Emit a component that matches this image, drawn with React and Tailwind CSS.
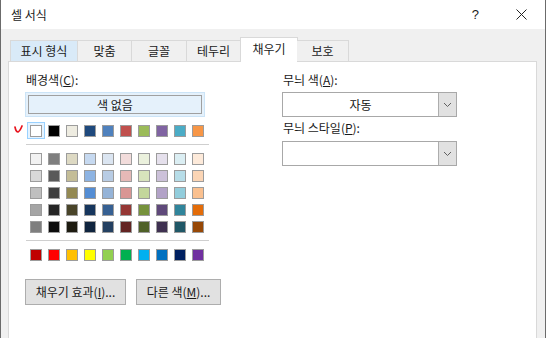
import React from "react";

// ─────────────────────────────────────────────────────────────
// 셀 서식 dialog — 채우기 tab
// ─────────────────────────────────────────────────────────────

const THEME = ["#FFFFFF", "#000000", "#EEECE1", "#1F497D", "#4F81BD", "#C0504D", "#9BBB59", "#8064A2", "#4BACC6", "#F79646"];

const TINTS = [
    ["#F2F2F2", "#7F7F7F", "#DDD9C3", "#C6D9F0", "#DBE5F1", "#F2DCDB", "#EBF1DD", "#E5E0EC", "#DBEEF3", "#FDEADA"],
    ["#D8D8D8", "#595959", "#C4BD97", "#8DB3E2", "#B8CCE4", "#E5B9B7", "#D7E3BC", "#CCC1D9", "#B7DDE8", "#FBD5B5"],
    ["#BFBFBF", "#3F3F3F", "#938953", "#548DD4", "#95B3D7", "#D99694", "#C3D69B", "#B2A2C7", "#92CDDC", "#FAC08F"],
    ["#A5A5A5", "#262626", "#494429", "#17365D", "#366092", "#953734", "#76923C", "#5F497A", "#31859B", "#E36C09"],
    ["#7F7F7F", "#0C0C0C", "#1D1B10", "#0F243E", "#244061", "#632423", "#4F6128", "#3F3151", "#205867", "#974806"],
];

const STANDARD = ["#C00000", "#FF0000", "#FFC000", "#FFFF00", "#92D050", "#00B050", "#00B0F0", "#0070C0", "#002060", "#7030A0"];

const TABS = [
    { label: "표시 형식", w: "w-[68px]", hover: true },
    { label: "맞춤", w: "w-[54px]" },
    { label: "글꼴", w: "w-[55px]" },
    { label: "테두리", w: "w-[54px]" },
    { label: "채우기", w: "w-[58px]", active: true },
    { label: "보호", w: "w-[52px]" },
];

function Swatch({ color }) {
    return <div className="w-[12px] h-[12px] border border-[#9c9c9c] shrink-0" style={{ background: color }} />;
}

function SwatchRow({ colors, first }) {
    return (
        <div className="relative flex gap-[6px] pl-[4px] h-[12px]">
            {first && (
                <div className="absolute left-[1px] top-[-3px] w-[18px] h-[17px] bg-[#e5f3ff] border border-[#99d1ff]" />
            )}
            {colors.map((c, i) => (
                <div key={i} className="relative">
                    <Swatch color={c} />
                </div>
            ))}
        </div>
    );
}

function Chevron() {
    return (
        <svg width="9" height="6" viewBox="0 0 9 6" className="block">
            <path d="M1 1 L4.5 4.5 L8 1" fill="none" stroke="#606060" strokeWidth="1" />
        </svg>
    );
}

function Combo({ value }) {
    return (
        <div className="flex h-[25px] border border-[#a8a8a8] bg-white">
            <div className="flex-1 flex items-center justify-center text-[12px] text-[#111]">{value}</div>
            <div className="w-[18px] bg-[#e1e1e1] border-l border-[#adadad] flex items-center justify-center">
                <Chevron />
            </div>
        </div>
    );
}

export default function App() {
    return (
        <div
            className="w-[546px] h-[338px] overflow-hidden bg-[#f0f0f0] border-l border-r border-[#6b6b6b] flex flex-col text-[#1a1a1a]"
            style={{ fontFamily: '"Noto Sans CJK KR", "Noto Sans", sans-serif' }}
        >
            {/* title bar */}
            <div className="h-[29px] bg-white flex items-center shrink-0 pl-[10px]">
                <span className="text-[12px] leading-[16px]">셀 서식</span>
                <span className="ml-auto text-[13px] leading-[16px] mr-[37px]" style={{ fontFamily: '"Liberation Sans", sans-serif' }}>?</span>
                <svg width="11" height="11" viewBox="0 0 11 11" className="mr-[18px]">
                    <path d="M0.5 0.5 L10.5 10.5 M10.5 0.5 L0.5 10.5" stroke="#222" strokeWidth="1" />
                </svg>
            </div>

            <div className="flex-1 flex flex-col pl-[7px] pr-[8px]">
                {/* tabs */}
                <div className="flex items-end h-[25px] mt-[8px] pl-[2px] relative z-10">
                    {TABS.map((t, i) => (
                        <div
                            key={i}
                            className={
                                t.active
                                    ? `${t.w} h-[25px] bg-white border border-b-0 border-[#d9d9d9] -ml-px -mr-px flex items-center justify-center text-[12px] pb-[2px]`
                                    : t.hover
                                    ? `${t.w} h-[21px] bg-[#d9eaf8] border border-b-0 border-[#d9d9d9] flex items-center justify-center text-[12px] mb-px`
                                    : `${t.w} h-[21px] bg-[#f0f0f0] border border-b-0 border-l-0 border-[#d9d9d9] flex items-center justify-center text-[12px] mb-px`
                            }
                        >
                            {t.label}
                        </div>
                    ))}
                </div>

                {/* panel */}
                <div className="flex-1 -mt-px bg-white border border-b-0 border-[#d9d9d9] flex pl-[17px] pt-[10px]">
                    {/* left column: background colour */}
                    <div className="w-[184px] shrink-0 flex flex-col relative">
                        <div className="h-[16px] text-[12px] leading-[16px]">
                            배경색(<span className="underline">C</span>):
                        </div>
                        <div className="mt-[4px] -ml-px w-[180px] h-[25px] bg-[#e5f1fb] border border-[#cce4f7] p-[2px]">
                            <div className="w-full h-full border border-[#a0a0a0] flex items-center justify-center text-[12px]">
                                색 없음
                            </div>
                        </div>

                        <div className="mt-[8px] relative">
                            <svg width="10" height="9" viewBox="0 0 10 9" className="absolute left-[-12px] top-[0px]">
                                <path d="M1 2 Q2 7 4 7 Q6 6 8 1" fill="none" stroke="#e8141e" strokeWidth="1.7" strokeLinecap="round" />
                            </svg>
                            <SwatchRow colors={THEME} first />
                        </div>

                        <div className="mt-[7px] w-[183px] h-px bg-[#cfcfcf]" />

                        <div className="mt-[8px] flex flex-col gap-[5px]">
                            {TINTS.map((row, i) => (
                                <SwatchRow key={i} colors={row} />
                            ))}
                        </div>

                        <div className="mt-[7px] w-[183px] h-px bg-[#cfcfcf]" />

                        <div className="mt-[8px]">
                            <SwatchRow colors={STANDARD} />
                        </div>

                        <div className="mt-[18px] -ml-px flex gap-[10px]">
                            <div className="w-[101px] shrink-0 h-[26px] bg-[#e1e1e1] border border-[#adadad] flex items-center justify-center text-[12px]">
                                채우기 효과(<span className="underline">I</span>)...
                            </div>
                            <div className="w-[85px] shrink-0 h-[26px] bg-[#e1e1e1] border border-[#adadad] flex items-center justify-center text-[12px]">
                                다른 색(<span className="underline">M</span>)...
                            </div>
                        </div>
                    </div>

                    {/* right column: pattern */}
                    <div className="ml-[72px] w-[175px] shrink-0 flex flex-col">
                        <div className="h-[16px] text-[12px] leading-[16px] pl-px">
                            무늬 색(<span className="underline">A</span>):
                        </div>
                        <div className="mt-[4px]">
                            <Combo value="자동" />
                        </div>
                        <div className="mt-[3px] h-[16px] text-[12px] leading-[16px] pl-px">
                            무늬 스타일(<span className="underline">P</span>):
                        </div>
                        <div className="mt-[5px]">
                            <Combo value="" />
                        </div>
                    </div>
                </div>
            </div>
        </div>
    );
}
